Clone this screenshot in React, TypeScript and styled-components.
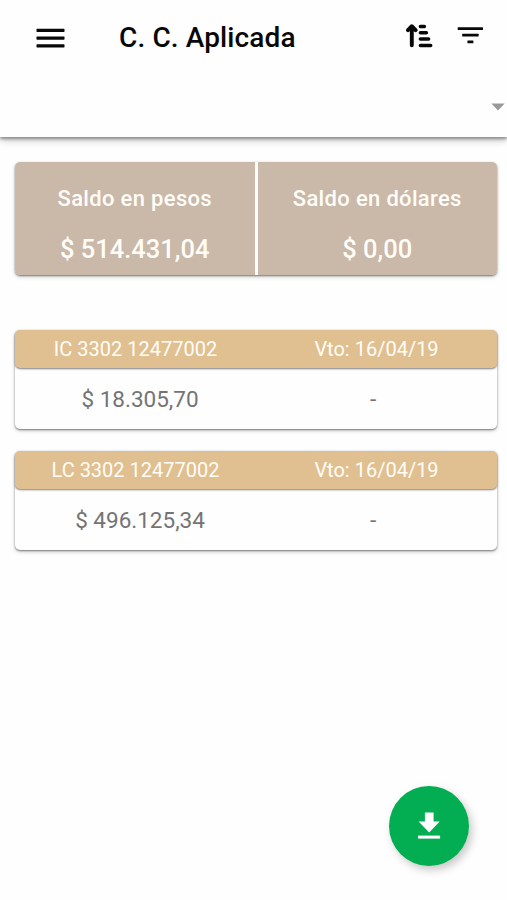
import React from 'react';
import styled, { createGlobalStyle } from 'styled-components';

const GlobalStyle = createGlobalStyle`
  * { box-sizing: border-box; }
  body {
    margin: 0;
    background: #fefefe;
    font-family: Roboto, "Noto Sans", sans-serif;
  }
`;

const Screen = styled.div`
  height: 900px;
  overflow: hidden;
`;

const Header = styled.header`
  height: 137px;
  background: #fefefe;
  box-shadow: 0 2px 3px rgba(0, 0, 0, 0.36), 0 3px 8px rgba(0, 0, 0, 0.22);
`;

const Toolbar = styled.div`
  display: flex;
  align-items: center;
  height: 76px;
  padding: 0 23px 0 36px;
`;

const IconButton = styled.button<{ $gap?: number; $lift?: number }>`
  display: flex;
  padding: 0 0 ${(p) => p.$lift ?? 0}px;
  margin: 0 0 0 ${(p) => p.$gap ?? 0}px;
  border: 0;
  background: none;
  color: #080808;
`;

const Title = styled.h1`
  flex: 1;
  margin: 0 0 0 54px;
  font-size: 28px;
  font-weight: 500;
  line-height: 32px;
  letter-spacing: 0.12px;
  color: #080808;
  white-space: nowrap;
`;

const Selector = styled.div`
  display: flex;
  justify-content: flex-end;
  align-items: center;
  height: 61px;
  padding-right: 2px;
`;

const Content = styled.main`
  padding: 25px 10px 0 15px;
`;

const Summary = styled.section`
  display: grid;
  grid-template-columns: 239.5px 1fr;
  column-gap: 3px;
  height: 113px;
  margin-bottom: 55px;
  border-radius: 5px;
  overflow: hidden;
  background: #fefefe;
  box-shadow: 0 1px 2px rgba(0, 0, 0, 0.46), 0 2px 4px rgba(0, 0, 0, 0.16);
`;

const Balance = styled.div`
  display: flex;
  flex-direction: column;
  align-items: center;
  padding-top: 23px;
  background: #cab8a8;
  color: #fffdf8;
  font-weight: 500;
`;

const BalanceLabel = styled.span`
  font-size: 22px;
  line-height: 28px;
  letter-spacing: 0.33px;
`;

const BalanceAmount = styled.strong`
  margin-top: 20px;
  font-size: 25.5px;
  line-height: 32px;
  font-weight: 500;
`;

const Entry = styled.article`
  height: 99px;
  margin-bottom: 22px;
  border-radius: 5px;
  background: #fefefe;
  box-shadow: 0 1px 2px rgba(0, 0, 0, 0.46), 0 2px 4px rgba(0, 0, 0, 0.16);
`;

const EntryRow = styled.div`
  display: grid;
  grid-template-columns: 1fr 1fr;
  align-items: center;
  justify-items: center;
`;

const EntryHeader = styled(EntryRow)`
  height: 38px;
  border-radius: 5px;
  background: #e0c090;
  color: #fffdf8;
  font-size: 20px;
  box-shadow: 0 1px 2px rgba(0, 0, 0, 0.5);
`;

const EntryBody = styled(EntryRow)`
  grid-template-columns: 242px 224px;
  height: 61px;
  padding: 0 0 0 4px;
  color: #747474;
  font-size: 22.5px;
`;

const DownloadButton = styled.button`
  position: fixed;
  right: 38px;
  bottom: 34px;
  display: flex;
  align-items: center;
  justify-content: center;
  width: 80px;
  height: 80px;
  padding: 0;
  border: 0;
  border-radius: 50%;
  background: #03ad52;
  box-shadow: 3px 4px 8px rgba(0, 0, 0, 0.22);
`;

const MenuIcon = () => (
  <svg width="29" height="21" viewBox="0 0 29 21" fill="currentColor">
    <rect x="0.5" y="0.8" width="28" height="3.1" rx="0.6" />
    <rect x="0.5" y="8.6" width="28" height="3.1" rx="0.6" />
    <rect x="0.5" y="16.3" width="28" height="3.1" rx="0.6" />
  </svg>
);

const SortIcon = () => (
  <svg width="27" height="30" viewBox="0 0 27 30" fill="none" stroke="currentColor" strokeLinecap="round">
    <path d="M5.8 24.2V6M2 9.2L5.8 5.2L9.6 9.2" strokeWidth="3.9" strokeLinejoin="round" />
    <path d="M14.4 5.6H18.4M14.4 11.8H20.4M14.4 18.1H22.6M14.4 24.5H24.7" strokeWidth="3.5" />
  </svg>
);

const FilterIcon = () => (
  <svg width="27" height="30" viewBox="0 0 27 30" fill="currentColor">
    <rect x="0.7" y="7.2" width="25.3" height="2.8" rx="0.5" />
    <rect x="5.2" y="13.8" width="16.4" height="2.8" rx="0.5" />
    <rect x="10.4" y="20.4" width="6" height="2.8" rx="0.5" />
  </svg>
);

const CaretIcon = () => (
  <svg width="14" height="8" viewBox="0 0 14 8" fill="#999999">
    <path d="M0.3 0.6H13.7L7 7.4Z" />
  </svg>
);

const DownloadIcon = () => (
  <svg width="24" height="28" viewBox="0 0 24 28" fill="#ffffff">
    <path d="M7.9 0.5H16.6V9.5H22.7L12.2 20.6L1.6 9.5H7.9Z" />
    <rect x="1.1" y="23.6" width="22" height="3" />
  </svg>
);

const balances = [
  { label: 'Saldo en pesos', amount: '$ 514.431,04' },
  { label: 'Saldo en dólares', amount: '$ 0,00' },
];

const entries = [
  { code: 'IC 3302 12477002', due: 'Vto: 16/04/19', pesos: '$ 18.305,70', dollars: '-' },
  { code: 'LC 3302 12477002', due: 'Vto: 16/04/19', pesos: '$ 496.125,34', dollars: '-' },
];

export default function App() {
  return (
    <Screen>
      <GlobalStyle />
      <Header>
        <Toolbar>
          <IconButton aria-label="Menú"><MenuIcon /></IconButton>
          <Title>C. C. Aplicada</Title>
          <IconButton aria-label="Ordenar" $lift={5}><SortIcon /></IconButton>
          <IconButton aria-label="Filtrar" $gap={24} $lift={6}><FilterIcon /></IconButton>
        </Toolbar>
        <Selector><CaretIcon /></Selector>
      </Header>
      <Content>
        <Summary>
          {balances.map((b) => (
            <Balance key={b.label}>
              <BalanceLabel>{b.label}</BalanceLabel>
              <BalanceAmount>{b.amount}</BalanceAmount>
            </Balance>
          ))}
        </Summary>
        {entries.map((e) => (
          <Entry key={e.code}>
            <EntryHeader>
              <span>{e.code}</span>
              <span>{e.due}</span>
            </EntryHeader>
            <EntryBody>
              <span>{e.pesos}</span>
              <span>{e.dollars}</span>
            </EntryBody>
          </Entry>
        ))}
      </Content>
      <DownloadButton aria-label="Descargar"><DownloadIcon /></DownloadButton>
    </Screen>
  );
}
